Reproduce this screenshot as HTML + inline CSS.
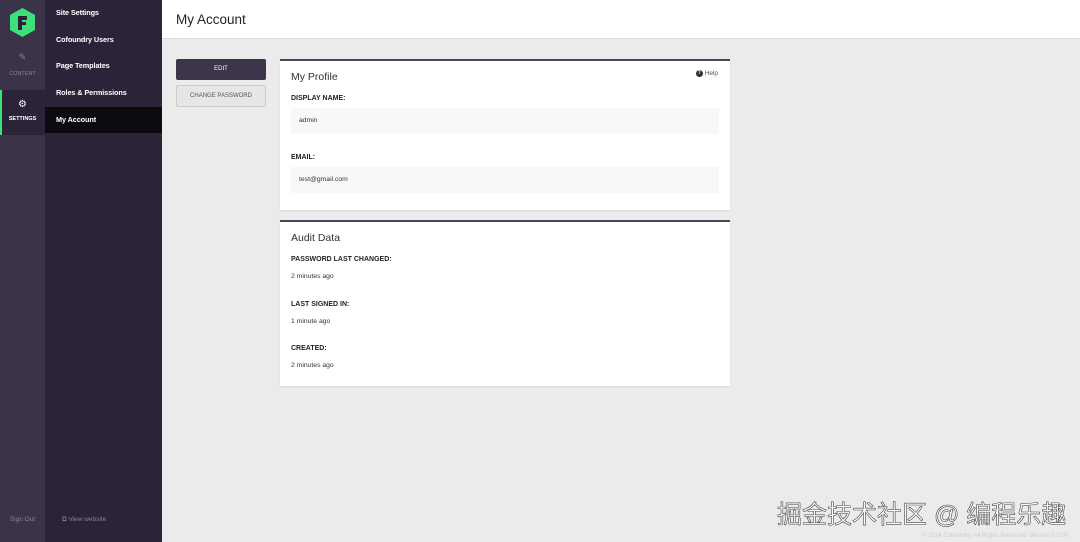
<!DOCTYPE html>
<html><head><meta charset="utf-8"><style>
*{margin:0;padding:0;box-sizing:border-box}
body{width:1080px;height:542px;overflow:hidden;background:#ebebeb;font-family:"Liberation Sans","DejaVu Sans",sans-serif;position:relative}
.rail{position:absolute;left:0;top:0;width:45px;height:542px;background:#3b3347}
.nav{position:absolute;left:45px;top:0;width:117px;height:542px;background:#2b2439}
.nav div{height:26.7px;line-height:26px;padding-left:11px;color:#fff;font-size:7.3px;font-weight:bold;letter-spacing:-.1px}
.nav .act{background:#0c0b10}
.header{position:absolute;left:162px;top:0;right:0;height:39px;background:#fff;border-bottom:1px solid #ddd}
.header h1{font-weight:normal;font-size:13.5px;color:#222;position:absolute;left:14px;top:12px}
.btn{position:absolute;left:176px;width:90px;height:21px;font-size:6px;text-align:center;line-height:21px}
.card{position:absolute;left:280px;width:450px;background:#fff;border-top:2px solid #4a4459;box-shadow:0 1px 2px rgba(0,0,0,.08)}
.card h2{font-weight:normal;font-size:10.5px;color:#333;position:absolute;left:11px}
.lbl{position:absolute;left:11px;font-size:7px;font-weight:bold;color:#222}
.val{position:absolute;left:11px;font-size:6.8px;color:#333}
.inp{position:absolute;left:11px;width:428px;height:26px;background:#f8f8f8;font-size:6.8px;color:#333;padding-left:8px;line-height:26px}
</style></head><body>
<div class="rail">
 <svg style="position:absolute;left:9px;top:8px" width="27" height="29" viewBox="0 0 27 29"><polygon points="13.5,0 26,7 26,22 13.5,29 1,22 1,7" fill="#3ee07a"/><path d="M9 8h9v4h-5v2h4v3h-4v5H9z" fill="#2b2439"/><rect x="13" y="12" width="5" height="2" fill="#3ee07a"/></svg>
 <div style="position:absolute;left:0;top:52px;width:45px;text-align:center;color:#8a8494;font-size:9px">✎</div>
 <div style="position:absolute;left:0;top:71px;width:45px;text-align:center;color:#8a8494;font-size:5.5px">CONTENT</div>
 <div style="position:absolute;left:0;top:90px;width:45px;height:45px;background:#2b2439;border-left:2px solid #3ee07a"></div>
 <div style="position:absolute;left:0;top:99px;width:45px;text-align:center;color:#fff;font-size:10px">⚙</div>
 <div style="position:absolute;left:0;top:116px;width:45px;text-align:center;color:#fff;font-size:5.5px;font-weight:bold">SETTINGS</div>
 <div style="position:absolute;left:0;top:516px;width:45px;text-align:center;color:#8a8494;font-size:6.5px">Sign Out</div>
</div>
<div class="nav">
 <div>Site Settings</div><div>Cofoundry Users</div><div>Page Templates</div><div>Roles &amp; Permissions</div><div class="act">My Account</div>
 <span style="position:absolute;left:17px;top:516px;color:#8a8494;font-size:6.5px;font-weight:normal">⧉ View website</span>
</div>
<div class="header"><h1>My Account</h1></div>
<div class="btn" style="top:59px;background:#3d3549;color:#fff;border-radius:2px">EDIT</div>
<div class="btn" style="top:85px;height:22px;background:#e6e6e6;border:1px solid #ccc;color:#555;border-radius:2px">CHANGE PASSWORD</div>
<div class="card" style="top:59px;height:151px">
 <h2 style="top:10px">My Profile</h2>
 <span style="position:absolute;right:12px;top:9px;font-size:6.5px;color:#555;line-height:8px"><b style="display:inline-block;vertical-align:middle;width:7px;height:7px;border-radius:50%;background:#333;color:#fff;font-size:5px;text-align:center;line-height:7px">?</b> Help</span>
 <div class="lbl" style="top:34px">DISPLAY NAME:</div>
 <div class="inp" style="top:47px">admin</div>
 <div class="lbl" style="top:93px">EMAIL:</div>
 <div class="inp" style="top:106px">test@gmail.com</div>
</div>
<div class="card" style="top:220px;height:166px">
 <h2 style="top:10px">Audit Data</h2>
 <div class="lbl" style="top:34px">PASSWORD LAST CHANGED:</div>
 <div class="val" style="top:51px">2 minutes ago</div>
 <div class="lbl" style="top:79px">LAST SIGNED IN:</div>
 <div class="val" style="top:96px">1 minute ago</div>
 <div class="lbl" style="top:123px">CREATED:</div>
 <div class="val" style="top:140px">2 minutes ago</div>
</div>
<div style="position:absolute;left:777px;top:495px;font-size:25px;color:#fff;font-family:'Liberation Sans','Noto Sans CJK SC',sans-serif;-webkit-text-stroke:.6px #444;letter-spacing:0px;white-space:nowrap">掘金技术社区 @ 编程乐趣</div>
<div style="position:absolute;right:12px;top:533px;font-size:6px;color:#ccc">© 2024 Cofoundry. All Rights Reserved. Version 0.2.00</div>
</body></html>
